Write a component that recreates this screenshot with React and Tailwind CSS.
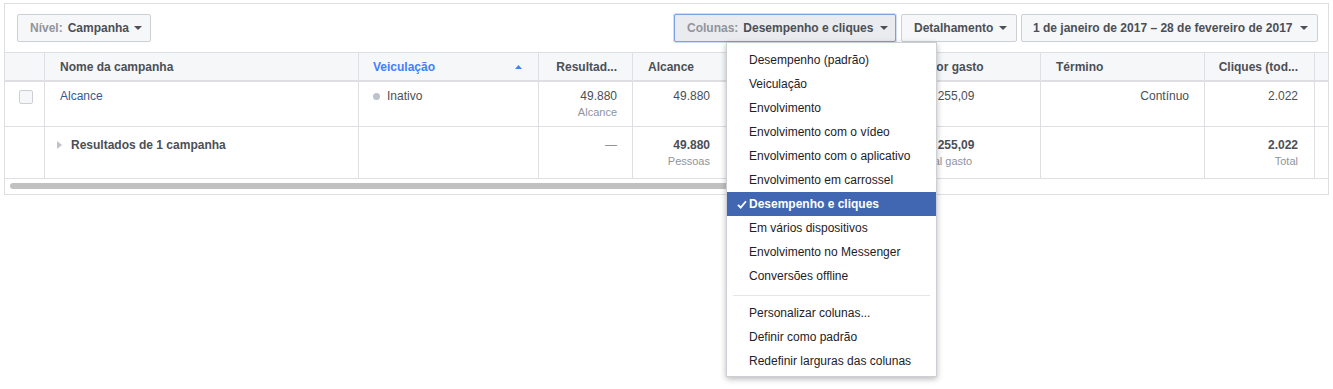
import React from "react";

function Caret({ color = "#4b4f56" }) {
  return (
    <svg width="8" height="4" viewBox="0 0 8 4" className="shrink-0">
      <path d="M0 0 L8 0 L4 4 Z" fill={color} />
    </svg>
  );
}

const cols = [
  "w-[40px]",
  "w-[314px]",
  "w-[180px]",
  "w-[94px]",
  "w-[94px]",
  "w-[176px]",
  "w-[138px]",
  "w-[164px]",
  "w-[110px]",
];

function Cell({ i, className = "", children }) {
  return (
    <div className={`${cols[i]} shrink-0 border-r border-[#dddfe2] ${className}`}>{children}</div>
  );
}

const menuItems = [
  "Desempenho (padrão)",
  "Veiculação",
  "Envolvimento",
  "Envolvimento com o vídeo",
  "Envolvimento com o aplicativo",
  "Envolvimento em carrossel",
  "Desempenho e cliques",
  "Em vários dispositivos",
  "Envolvimento no Messenger",
  "Conversões offline",
];

export default function App() {
  return (
    <div className="w-[1333px] h-[389px] bg-white font-['Liberation_Sans',Arial,sans-serif] text-[12px] leading-[16px] text-[#4b4f56] pt-[3px] pl-[4px]">
      <div className="w-[1325px] border border-[#dddfe2] bg-white">
        {/* Toolbar */}
        <div className="h-[48px] flex items-start pt-[10px] pl-[12px] pr-[10px]">
          <button className="h-[28px] w-[134px] flex items-center gap-[5px] pl-[12px] bg-[#f6f7f9] border border-[#ccd0d5] rounded-[2px] font-bold">
            <span className="text-[#90949c]">Nível:</span>
            <span>Campanha</span>
            <Caret />
          </button>
          <div className="ml-auto flex items-start">
            <div className="relative">
              <button className="h-[28px] w-[222px] flex items-center gap-[5px] pl-[12px] bg-[#e9ebee] border border-[#7b9fe0] shadow-[0_0_0_1px_rgba(120,160,240,0.35)] rounded-[2px] font-bold">
                <span className="text-[#90949c]">Colunas:</span>
                <span>Desempenho e cliques</span>
                <span className="ml-[2px]"><Caret /></span>
              </button>
              <div className="absolute z-10 left-[52px] top-[28px] w-[211px] bg-white border border-[#ccd0d5] shadow-[0_2px_6px_rgba(0,0,0,0.28)] pt-[5px] pb-[3px] font-normal text-[#1d2129]">
                {menuItems.map((m) => {
                  const sel = m === "Desempenho e cliques";
                  return (
                    <div
                      key={m}
                      className={`relative h-[24px] flex items-center pl-[22px] whitespace-nowrap ${sel ? "bg-[#4267b2] text-white font-bold" : ""}`}
                    >
                      {sel && (
                        <svg width="10" height="9" viewBox="0 0 10 9" className="absolute left-[10px] top-[8px]">
                          <path d="M1 4.8 L3.7 7.6 L9 1.2" stroke="white" strokeWidth="1.8" fill="none" />
                        </svg>
                      )}
                      {m}
                    </div>
                  );
                })}
                <div className="mt-[7px] mb-[5px] mx-[6px] border-t border-[#e5e6e9]" />
                {["Personalizar colunas...", "Definir como padrão", "Redefinir larguras das colunas"].map((m) => (
                  <div key={m} className="h-[24px] flex items-center pl-[22px] whitespace-nowrap">
                    {m}
                  </div>
                ))}
              </div>
            </div>
            <button className="ml-[5px] h-[28px] w-[116px] flex items-center gap-[6px] pl-[12px] bg-[#f6f7f9] border border-[#ccd0d5] rounded-[2px] font-bold">
              <span>Detalhamento</span>
              <Caret />
            </button>
            <button className="ml-[4px] h-[28px] w-[297px] flex items-center pl-[11px] pr-[9px] bg-[#f6f7f9] border border-[#ccd0d5] rounded-[2px] font-bold">
              <span>1 de janeiro de 2017 – 28 de fevereiro de 2017</span>
              <span className="ml-auto"><Caret /></span>
            </button>
          </div>
        </div>

        {/* Header */}
        <div className="flex h-[30px] border-t border-b-2 border-[#dddfe2] bg-[#f6f7f9] font-bold">
          <Cell i={0} />
          <Cell i={1} className="flex items-center pl-[15px]">Nome da campanha</Cell>
          <Cell i={2} className="flex items-center pl-[14px] pr-[16px] text-[#4080ff]">
            <span>Veiculação</span>
            <svg width="7" height="4" viewBox="0 0 7 4" className="ml-auto">
              <path d="M0 4 L7 4 L3.5 0 Z" fill="#4080ff" />
            </svg>
          </Cell>
          <Cell i={3} className="flex items-center justify-end pr-[15px]">Resultad...</Cell>
          <Cell i={4} className="flex items-center pl-[15px]">Alcance</Cell>
          <Cell i={5} />
          <Cell i={6} className="flex items-center pl-[16px]">Valor gasto</Cell>
          <Cell i={7} className="flex items-center pl-[15px]">Término</Cell>
          <Cell i={8} className="flex items-center justify-end pr-[16px]">Cliques (tod...</Cell>
          <div className="flex-1" />
        </div>

        {/* Row 1 */}
        <div className="flex h-[45px] border-b border-[#dddfe2]">
          <Cell i={0} className="pl-[14px] pt-[8px]">
            <div className="w-[14px] h-[14px] rounded-[2px] border border-[#ccd0d5] bg-[#f6f7f9]" />
          </Cell>
          <Cell i={1} className="pl-[15px] pt-[6px] text-[#365899]">Alcance</Cell>
          <Cell i={2} className="pl-[14px] pt-[6px] flex items-start">
            <span className="mt-[5px] w-[7px] h-[7px] rounded-full bg-[#bec2c9]" />
            <span className="ml-[7px]">Inativo</span>
          </Cell>
          <Cell i={3} className="pr-[15px] pt-[6px] text-right">
            <div>49.880</div>
            <div className="text-[11px] text-[#90949c]">Alcance</div>
          </Cell>
          <Cell i={4} className="pr-[16px] pt-[6px] text-right">49.880</Cell>
          <Cell i={5} />
          <Cell i={6} className="pl-[16px] pt-[6px]">R$ 255,09</Cell>
          <Cell i={7} className="pr-[15px] pt-[6px] text-right">Contínuo</Cell>
          <Cell i={8} className="pr-[16px] pt-[6px] text-right">2.022</Cell>
          <div className="flex-1" />
        </div>

        {/* Row 2 */}
        <div className="flex h-[52px] border-b border-[#dddfe2]">
          <Cell i={0} />
          <Cell i={1} className="pl-[12px] pt-[10px] flex items-start font-bold">
            <svg width="5" height="8" viewBox="0 0 5 8" className="mt-[4px]">
              <path d="M0 0 L5 4 L0 8 Z" fill="#bec2c9" />
            </svg>
            <span className="ml-[9px]">Resultados de 1 campanha</span>
          </Cell>
          <Cell i={2} />
          <Cell i={3} className="pr-[15px] pt-[10px] text-right text-[#90949c]">—</Cell>
          <Cell i={4} className="pr-[16px] pt-[10px] text-right">
            <div className="font-bold">49.880</div>
            <div className="text-[11px] text-[#90949c]">Pessoas</div>
          </Cell>
          <Cell i={5} />
          <Cell i={6} className="pl-[16px] pt-[10px]">
            <div className="font-bold">R$ 255,09</div>
            <div className="text-[11px] text-[#90949c]">Total gasto</div>
          </Cell>
          <Cell i={7} />
          <Cell i={8} className="pr-[16px] pt-[10px] text-right">
            <div className="font-bold">2.022</div>
            <div className="text-[11px] text-[#90949c]">Total</div>
          </Cell>
          <div className="flex-1" />
        </div>

        {/* Scrollbar */}
        <div className="h-[15px] pt-[4px] pl-[5px]">
          <div className="h-[6px] w-[790px] rounded-full bg-[#c1c1c1]" />
        </div>
      </div>
    </div>
  );
}
